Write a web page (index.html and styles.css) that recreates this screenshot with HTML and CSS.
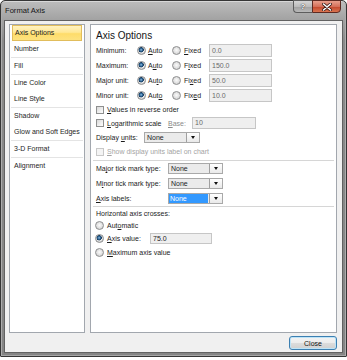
FILE: index.html
```html
<!DOCTYPE html>
<html>
<head>
<meta charset="utf-8">
<title>Format Axis</title>
<link rel="stylesheet" href="styles.css">
</head>
<body>
<div class="window">
  <div class="titlebar">
    <span class="title">Format Axis</span>
    <div class="caption-btns">
      <div class="cbtn help">?</div>
      <div class="cbtn close">
        <svg width="10" height="8" viewBox="0 0 10 8"><path d="M1.5 1 L8.5 7 M8.5 1 L1.5 7" stroke="#3a1a14" stroke-width="3" stroke-linecap="round"/><path d="M1.5 1 L8.5 7 M8.5 1 L1.5 7" stroke="#ffffff" stroke-width="1.6" stroke-linecap="round"/></svg>
      </div>
    </div>
  </div>
  <div class="client">
    <div class="panels">
      <ul class="nav">
        <li class="item selected">Axis Options</li>
        <li class="item sep">Number</li>
        <li class="item sep">Fill</li>
        <li class="item">Line Color</li>
        <li class="item sep">Line Style</li>
        <li class="item">Shadow</li>
        <li class="item sep">Glow and Soft Edges</li>
        <li class="item sep">3-D Format</li>
        <li class="item">Alignment</li>
      </ul>
      <div class="content">
        <div class="heading">Axis Options</div>
        <div class="axrow">
          <span class="axlbl">Minimum:</span>
          <span class="radio on"></span><span class="auto"><u>A</u>uto</span>
          <span class="radio"></span><span class="fixed"><u>F</u>ixed</span>
          <span class="field">0.0</span>
        </div>
        <div class="axrow">
          <span class="axlbl">Maximum:</span>
          <span class="radio on"></span><span class="auto">A<u>u</u>to</span>
          <span class="radio"></span><span class="fixed">F<u>i</u>xed</span>
          <span class="field">150.0</span>
        </div>
        <div class="axrow">
          <span class="axlbl">Major unit:</span>
          <span class="radio on"></span><span class="auto">Au<u>t</u>o</span>
          <span class="radio"></span><span class="fixed">Fi<u>x</u>ed</span>
          <span class="field">50.0</span>
        </div>
        <div class="axrow">
          <span class="axlbl">Minor unit:</span>
          <span class="radio on"></span><span class="auto">Aut<u>o</u></span>
          <span class="radio"></span><span class="fixed">Fix<u>e</u>d</span>
          <span class="field">10.0</span>
        </div>
        <div class="crow r-values">
          <span class="check"></span><span><u>V</u>alues in reverse order</span>
        </div>
        <div class="crow r-log">
          <span class="check"></span><span class="loglbl"><u>L</u>ogarithmic scale</span>
          <span class="baselbl"><u>B</u>ase:</span>
          <span class="field basefield">10</span>
        </div>
        <div class="crow r-disp">
          <span class="displbl">Display <u>u</u>nits:</span>
          <div class="dd dd-disp"><span class="dd-text">None</span><span class="dd-btn"><span class="tri"></span></span></div>
        </div>
        <div class="crow r-show disabled">
          <span class="check dis"></span><span><u>S</u>how display units label on chart</span>
        </div>
        <div class="sep-line"></div>
        <div class="crow r-tick">
          <span class="ticklbl">Ma<u>j</u>or tick mark type:</span>
          <div class="dd"><span class="dd-text">None</span><span class="dd-btn"><span class="tri"></span></span></div>
        </div>
        <div class="crow r-tick">
          <span class="ticklbl">M<u>i</u>nor tick mark type:</span>
          <div class="dd"><span class="dd-text">None</span><span class="dd-btn"><span class="tri"></span></span></div>
        </div>
        <div class="crow r-tick">
          <span class="ticklbl"><u>A</u>xis labels:</span>
          <div class="dd"><span class="dd-text sel">None</span><span class="dd-btn"><span class="tri"></span></span></div>
        </div>
        <div class="sep-line sep2"></div>
        <div class="crow r-hz">Horizontal axis crosses:</div>
        <div class="crow r-auto">
          <span class="radio"></span><span>Aut<u>o</u>matic</span>
        </div>
        <div class="crow r-av">
          <span class="radio on"></span><span class="avlbl"><u>A</u>xis value:</span>
          <span class="field avfield">75.0</span>
        </div>
        <div class="crow r-max">
          <span class="radio"></span><span><u>M</u>aximum axis value</span>
        </div>
      </div>
    </div>
    <div class="footer">
      <button class="btn-close">Close</button>
    </div>
  </div>
</div>
</body>
</html>
```
FILE: styles.css
```css
* { box-sizing: border-box; }
html, body { margin: 0; padding: 0; background: #ffffff; }
body {
  font-family: "Liberation Sans", Arial, sans-serif;
  font-size: 7px;
  color: #1b1b1b;
}
u { text-decoration: underline; text-underline-offset: 1px; }

.window {
  width: 347px;
  height: 357px;
  border: 1px solid #363636;
  border-radius: 5px 5px 1px 1px;
  background: linear-gradient(#bdbdbd, #a2a2a2 19px, #8a8a8a 40px, #858585);
  padding: 0 3px 3px 3px;
  display: flex;
  flex-direction: column;
  box-shadow: inset 1px 0 0 #adadad, inset -1px 0 0 #adadad, inset 0 -1px 0 #a5a5a5, inset 0 1px 0 #d8d8d8;
}

.titlebar {
  height: 19px;
  display: flex;
  align-items: flex-start;
  justify-content: space-between;
  padding: 0 2px 0 1px;
}
.title {
  font-size: 7.6px;
  line-height: 19px;
  color: #141414;
}
.caption-btns { display: flex; }
.cbtn {
  height: 13px;
  display: flex;
  align-items: center;
  justify-content: center;
  margin-top: -1px;
}
.help {
  width: 19px;
  border: 1px solid #5d5d5d;
  border-right: none;
  border-radius: 0 0 0 4px;
  background: linear-gradient(#d6d6d6, #bcbcbc 50%, #a0a0a0 51%, #bababa);
  color: #ffffff;
  font-size: 8px;
  font-weight: bold;
  text-shadow: 0 0 1px #333, 0 0 1px #333;
}
.close {
  width: 29px;
  border: 1px solid #5e2a22;
  border-radius: 0 0 4px 0;
  background: linear-gradient(#e9a08d, #d5705a 50%, #c2452b 51%, #d97450);
}

.client {
  flex: 1;
  border: 1px solid #626262;
  background: #f0f0f0;
  padding: 3px 5px 2px 4px;
  display: flex;
  flex-direction: column;
}
.panels {
  display: flex;
  gap: 5px;
  height: 309px;
}

.nav {
  width: 76px;
  margin: 0;
  padding: 0 1px;
  list-style: none;
  background: #ffffff;
  border: 1px solid #a2a7ae;
}
.item {
  height: 16px;
  line-height: 16px;
  padding-left: 3px;
  color: #1e1e1e;
  white-space: nowrap;
}
.item.sep {
  height: 17px;
  border-bottom: 1px solid #e4e4e4;
}
.item.selected {
  border: 1px solid #e1bd5c;
  line-height: 14px;
  padding-left: 2px;
  margin: 0 1px;
  background: linear-gradient(#fff2c2, #ffe895 45%, #fedc6a 55%, #fde27f);
  color: #202020;
}

.content {
  flex: 1;
  background: #ffffff;
  border: 1px solid #a2a7ae;
  padding: 5px 0 0 5px;
}
.heading {
  font-size: 10px;
  line-height: 12px;
  height: 13px;
  color: #151515;
}

.axrow {
  display: flex;
  align-items: center;
  height: 15px;
}
.axlbl { width: 41px; }
.auto { margin-left: 2px; width: 24px; }
.fixed { margin-left: 3px; width: 25px; }

.radio {
  flex: none;
  width: 9px;
  height: 9px;
  border-radius: 50%;
  border: 1px solid #8d8e8f;
  background: radial-gradient(circle at 50% 45%, #fbfbfb 0, #e8e8e8 2px, #d3d3d3 4px);
}
.radio.on {
  background: radial-gradient(circle at 45% 40%, #9cc3e4 0, #2f6a9c 1.3px, #1a3c5e 2.4px, #eeeeee 2.9px, #d2d2d2 4px);
}

.field {
  height: 13px;
  width: 63px;
  border: 1px solid #c6c6c6;
  background: #efefef;
  color: #6a6a6a;
  padding-left: 2px;
  line-height: 11px;
}

.crow {
  display: flex;
  align-items: center;
}
.check {
  flex: none;
  width: 8px;
  height: 8px;
  margin-right: 3px;
  border: 1px solid #8e8f8f;
  background: linear-gradient(135deg, #d8d8d8, #f4f4f4 70%, #ffffff);
}
.check.dis {
  border-color: #c8c8c8;
  background: #f4f4f4;
}
.r-values { height: 13px; }
.r-log { height: 14px; }
.loglbl { width: 61px; }
.baselbl { width: 24px; color: #8a8a8a; }
.basefield { width: 64px; height: 12px; line-height: 10px; }
.r-disp { height: 15px; }
.displbl { width: 48px; }
.r-show { height: 13px; }
.disabled { color: #a4a4a4; }

.sep-line {
  height: 1px;
  background: #d6d6d6;
  margin: 2px 2px 0 -3px;
}
.sep-line.sep2 { margin-top: 0; }

.r-tick { height: 15px; }
.ticklbl { width: 72px; }

.dd {
  display: flex;
  width: 55px;
  height: 11px;
  border: 1px solid #a9a9a9;
  background: #ebebeb;
}
.dd-disp { width: 56px; }
.dd-text {
  flex: 1;
  padding-left: 2px;
  line-height: 9px;
  color: #1b1b1b;
}
.dd-text.sel {
  background: #3399ff;
  color: #ffffff;
  margin: 0 1px 0 0;
  padding-left: 1px;
}
.dd-btn {
  width: 13px;
  display: flex;
  align-items: center;
  justify-content: center;
  border-left: 1px solid #a0a0a0;
  background: linear-gradient(#ffffff, #e9e9e9);
}
.tri {
  width: 0;
  height: 0;
  border-left: 2.5px solid transparent;
  border-right: 2.5px solid transparent;
  border-top: 3px solid #111111;
}

.r-hz { height: 12px; }
.r-auto { height: 12px; }
.r-auto .radio, .r-av .radio, .r-max .radio { margin-left: -1px; margin-right: 3px; }
.r-av { height: 14px; }
.avlbl { width: 43px; }
.avfield { width: 62px; height: 11px; line-height: 9px; color: #1b1b1b; }
.r-max { height: 14px; }

.footer {
  display: flex;
  justify-content: flex-end;
  margin-top: 3px;
}
.btn-close {
  width: 48px;
  height: 14px;
  padding: 0;
  font-family: "Liberation Sans", Arial, sans-serif;
  font-size: 7px;
  color: #111111;
  border: 1px solid #3c7fb1;
  border-radius: 3px;
  background: linear-gradient(#f4f4f4, #ececec 48%, #dcdcdc 52%, #d0d0d0);
  box-shadow: inset 0 0 0 1px #bde4f8;
}
```
